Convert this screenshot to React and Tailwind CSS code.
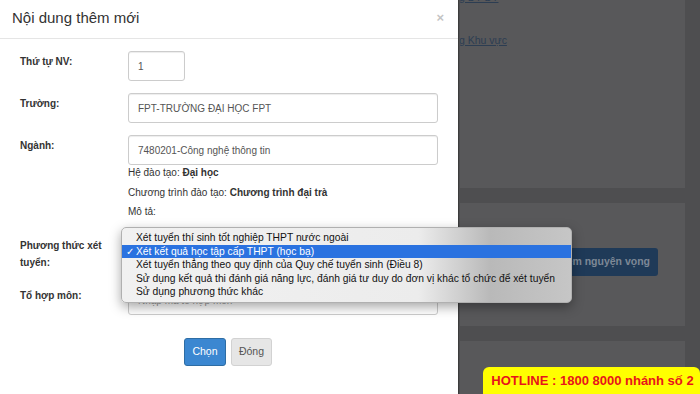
import React from 'react'

const options = [
  'Xét tuyển thí sinh tốt nghiệp THPT nước ngoài',
  'Xét kết quả học tập cấp THPT (học bạ)',
  'Xét tuyển thẳng theo quy định của Quy chế tuyển sinh (Điều 8)',
  'Sử dụng kết quả thi đánh giá năng lực, đánh giá tư duy do đơn vị khác tổ chức để xét tuyển',
  'Sử dụng phương thức khác',
]

function Field({ label, children, className = '' }) {
  return (
    <div className={`grid grid-cols-[108px_1fr] ${className}`}>
      <div className="pt-[2px] text-[10px] leading-[17px] font-bold text-[#333]">{label}</div>
      <div>{children}</div>
    </div>
  )
}

function TextInput({ value, placeholder, className = 'w-full' }) {
  return (
    <div
      className={`h-[30px] ${className} flex items-center px-[9px] border border-[#cccccc] rounded-[3px] shadow-[inset_0_1px_1px_rgba(0,0,0,0.075)] text-[10px] ${
        value ? 'text-[#555]' : 'text-[#999]'
      }`}
    >
      {value || placeholder}
    </div>
  )
}

export default function App() {
  return (
    <div className="relative w-[700px] h-[394px] overflow-hidden flex bg-[#4e4e50] font-['Liberation_Sans',Arial,sans-serif]">
      {/* modal */}
      <div className="w-[459px] h-full shrink-0 bg-white border-r border-[#3c3c3c] flex flex-col">
        <div className="h-[39px] shrink-0 px-[12px] flex items-center justify-between border-b border-[#e5e5e5]">
          <h4 className="text-[15px] text-[#333] pb-[2px]">Nội dung thêm mới</h4>
          <span className="text-[13px] font-bold text-[#c4c4c4] leading-none pr-[2px] pb-[4px]">×</span>
        </div>
        <div className="px-[20px]">
          <Field label="Thứ tự NV:" className="mt-[12px]">
            <TextInput value="1" className="w-[57px]" />
          </Field>
          <Field label="Trường:" className="mt-[12px]">
            <TextInput value="FPT-TRƯỜNG ĐẠI HỌC FPT" />
          </Field>
          <Field label="Ngành:" className="mt-[12px]">
            <TextInput value="7480201-Công nghệ thông tin" />
            <div className="text-[10px] text-[#333]">
              <p className="leading-[16px]">
                Hệ đào tạo: <b>Đại học</b>
              </p>
              <p className="leading-[16px] mt-[4px]">
                Chương trình đào tạo: <b>Chương trình đại trà</b>
              </p>
              <p className="leading-[16px] mt-[3px]">Mô tả:</p>
            </div>
          </Field>
          <Field
            label={
              <>
                Phương thức xét
                <br />
                tuyển:
              </>
            }
            className="mt-[15px]"
          >
            <TextInput value="Xét kết quả học tập cấp THPT (học bạ)" />
          </Field>
          <Field label="Tổ hợp môn:" className="mt-[14px]">
            <TextInput placeholder="Nhập mã tổ hợp môn" />
          </Field>
          <div className="mt-[23px] flex justify-center gap-[5px] pr-[2px]">
            <button className="h-[28px] w-[42px] rounded-[3px] bg-[#3b87d1] border border-[#2e6da4] text-white text-[10.5px]">
              Chọn
            </button>
            <button className="h-[28px] w-[41px] rounded-[3px] bg-[#e6e6e6] border border-[#d2d2d2] text-[#555] text-[10.5px]">
              Đóng
            </button>
          </div>
        </div>
      </div>

      {/* dimmed page behind */}
      <div className="flex-1 flex flex-col pl-[1px] pr-[15px] gap-[15px]">
        <div className="h-[188px] shrink-0 bg-[#58585a] overflow-hidden text-[10.5px] text-[#2c3d52]">
          <p className="-mt-[10px] -ml-[1px] underline leading-[14px]">g ĐT ĐT</p>
          <p className="mt-[29px] -ml-[1px] underline leading-[14px]">g Khu vực</p>
        </div>
        <div className="h-[123px] shrink-0 bg-[#58585a] flex items-center justify-end pr-[27px] pb-[5px]">
          <div className="h-[28px] px-[8px] flex items-center rounded-[3px] bg-[#1f3a58] text-[10.5px] font-bold text-[#7d8896]">
            Thêm nguyện vọng
          </div>
        </div>
        <div className="flex-1 bg-[#58585a]" />
      </div>

      {/* native select menu */}
      <div className="absolute left-[121px] top-[227px] w-[451px] py-[3px] rounded-[5px] border border-[#b0b0b0] shadow-[0_4px_12px_rgba(0,0,0,0.35)] bg-[linear-gradient(90deg,#f1f1f1_0%,#ececec_66%,#b9b9b9_82%,#c6c6c6_100%)] text-[10.3px] text-[#111]">
        {options.map((o, i) => (
          <div
            key={o}
            className={`relative h-[13.6px] leading-[13.6px] pl-[14px] whitespace-nowrap ${
              i === 1 ? 'bg-[#2a72e0] text-white' : ''
            }`}
          >
            {i === 1 && <span className="absolute left-[4px] top-0">✓</span>}
            {o}
          </div>
        ))}
      </div>

      {/* hotline */}
      <div className="absolute right-0 bottom-0 w-[217px] h-[27px] bg-[#ffff00] rounded-tl-[6px] rounded-tr-[6px] flex items-center justify-center pl-[2px] text-[13px] font-bold text-[#e8141b]">
        HOTLINE : 1800 8000 nhánh số 2
      </div>
    </div>
  )
}
